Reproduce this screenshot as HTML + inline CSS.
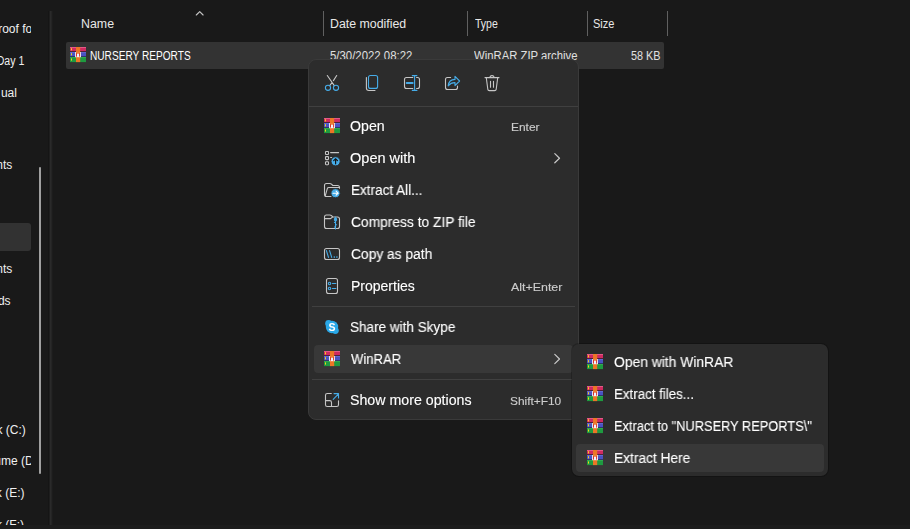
<!DOCTYPE html>
<html><head><meta charset="utf-8"><style>
*{margin:0;padding:0;box-sizing:border-box}
html,body{width:910px;height:529px;overflow:hidden;background:#191919}
body{position:relative;font-family:"Liberation Sans",sans-serif;color:#fff}
.a{position:absolute}
.t{position:absolute;white-space:pre;line-height:1;transform-origin:0 0}
.side{position:absolute;left:0;top:0;width:31px;height:525px;overflow:hidden}
.side .t{font-size:12px;color:#f0f0f0}
.hsep{position:absolute;top:11px;width:1px;height:25px;background:#606060}
.menu{position:absolute;background:#2c2c2c;border:1px solid #3a3a3a;border-radius:8px}
.sep{position:absolute;height:1px;background:#404040}
.hov{position:absolute;background:#383838;border-radius:4px}
svg.ov{position:absolute;left:0;top:0;overflow:visible}
</style></head><body>
<svg width="0" height="0" style="position:absolute"><defs><symbol id="rar" viewBox="0 0 16 16">
<rect x="0" y="0" width="16" height="4.4" fill="#cf2a60"/>
<rect x="0" y="0" width="16" height="1" fill="#e25a88"/>
<rect x="0" y="4.4" width="16" height="0.7" fill="#3a1a30"/>
<rect x="0" y="5.1" width="16" height="4.5" fill="#4a52c2"/>
<rect x="0" y="5.1" width="16" height="0.8" fill="#6670d8"/>
<rect x="0" y="9.6" width="16" height="0.5" fill="#1c2048"/>
<rect x="0" y="10.1" width="16" height="5" fill="#1e9a40"/>
<rect x="0" y="10.1" width="16" height="0.8" fill="#34b454"/>
<rect x="6" y="0" width="4.2" height="15.1" fill="#ec7626"/>
<rect x="5.1" y="5.1" width="5.9" height="5.1" fill="#f4f4f4"/>
<rect x="6" y="5.1" width="4.2" height="1.6" fill="#ec7626"/><path d="M6.5 9.6 V6.2 M9.6 9.6 V6.2" stroke="#d41a1a" stroke-width="0.9"/><rect x="7.2" y="7.2" width="1.8" height="2.6" fill="#eef6ff"/>
<rect x="1" y="1.2" width="1" height="2.2" fill="#f4d41c"/>
<rect x="1" y="6.2" width="1" height="2.2" fill="#f4d41c"/>
<rect x="1" y="11.4" width="1" height="2.2" fill="#f4d41c"/>
</symbol></defs></svg>
<div class="side">
<div class="t" style="top:23px;left:-8.5px">proof fo</div>
<div class="t" style="top:55px;left:-7.2px;transform:scaleX(0.88);transform-origin:31px 0">Day 1</div>
<div class="t" style="top:87px;left:0.9px">ual</div>
<div class="t" style="top:159px;left:-3.7px">nts</div>
<div class="a" style="left:-10px;top:223px;width:41px;height:28px;background:#323232;border-radius:3px"></div>
<div class="t" style="top:263px;left:-3.8px">nts</div>
<div class="t" style="top:295px;left:-2.1px">ds</div>
<div class="t" style="top:424px;left:-3.5px">k (C:)</div>
<div class="t" style="top:455px;left:-22.4px">Volume (D:)</div>
<div class="t" style="top:487px;left:-4.2px">k (E:)</div>
<div class="t" style="top:519px;left:-4px">k (F:)</div>
</div>
<div class="a" style="left:39px;top:167px;width:2px;height:307px;background:#a0a0a0;border-radius:1px"></div>
<div class="a" style="left:48px;top:11px;width:1px;height:514px;background:#151515"></div>
<div class="a" style="left:49px;top:11px;width:1px;height:514px;background:#1e1e1e"></div>
<div class="a" style="left:50px;top:11px;width:1px;height:514px;background:#2a2a2a"></div>
<div class="a" style="left:51px;top:11px;width:1px;height:514px;background:#242424"></div>
<div class="a" style="left:52px;top:11px;width:1px;height:514px;background:#1c1c1c"></div>
<div class="a" style="left:0;top:525px;width:910px;height:4px;background:#1c1c1c"></div>
<div class="t" style="left:80.97px;top:18px;font-size:12px;color:#e8e8e8;transform:scaleX(1.0323);">Name</div>
<div class="t" style="left:329.77px;top:18px;font-size:12px;color:#e8e8e8;transform:scaleX(1.0292);">Date modified</div>
<div class="t" style="left:475.3px;top:18px;font-size:12px;color:#e8e8e8;transform:scaleX(0.8769);">Type</div>
<div class="t" style="left:593.08px;top:18px;font-size:12px;color:#e8e8e8;transform:scaleX(0.9182);">Size</div>
<div class="hsep" style="left:323px"></div>
<div class="hsep" style="left:467px"></div>
<div class="hsep" style="left:587px"></div>
<div class="hsep" style="left:667px"></div>
<div class="a" style="left:66px;top:42px;width:598px;height:27px;background:#333333;border-radius:2px"></div>
<div class="t" style="left:89.76px;top:50px;font-size:12px;color:#ffffff;transform:scaleX(0.8432);">NURSERY REPORTS</div>
<div class="t" style="left:329.85px;top:50px;font-size:12px;color:#e0e0e0;transform:scaleX(0.9494);">5/30/2022 08:22</div>
<div class="t" style="left:474.4px;top:50px;font-size:12px;color:#e0e0e0;transform:scaleX(0.9427);">WinRAR ZIP archive</div>
<div class="t" style="left:630.6px;top:50px;font-size:12px;color:#e0e0e0;transform:scaleX(0.9032);">58 KB</div>
<div class="menu" style="left:308px;top:59px;width:271px;height:361px"></div>
<div class="sep" style="left:309px;top:106px;width:269px"></div>
<div class="sep" style="left:312px;top:306px;width:263px"></div>
<div class="hov" style="left:314px;top:345px;width:259px;height:28px"></div>
<div class="sep" style="left:312px;top:379px;width:263px"></div>
<div class="t" style="left:349.89px;top:119px;font-size:14px;color:#ffffff;transform:scaleX(1.0121);will-change:transform;-webkit-text-stroke:0.12px currentColor;">Open</div>
<div class="t" style="left:349.86px;top:151px;font-size:14px;color:#ffffff;transform:scaleX(1.0377);will-change:transform;-webkit-text-stroke:0.12px currentColor;">Open with</div>
<div class="t" style="left:350.63px;top:183px;font-size:14px;color:#ffffff;transform:scaleX(0.9653);will-change:transform;-webkit-text-stroke:0.12px currentColor;">Extract All...</div>
<div class="t" style="left:350.62px;top:215px;font-size:14px;color:#ffffff;transform:scaleX(0.9848);will-change:transform;-webkit-text-stroke:0.12px currentColor;">Compress to ZIP file</div>
<div class="t" style="left:350.61px;top:247px;font-size:14px;color:#ffffff;transform:scaleX(0.9852);will-change:transform;-webkit-text-stroke:0.12px currentColor;">Copy as path</div>
<div class="t" style="left:350.61px;top:279px;font-size:14px;color:#ffffff;transform:scaleX(0.9935);will-change:transform;-webkit-text-stroke:0.12px currentColor;">Properties</div>
<div class="t" style="left:350.43px;top:320px;font-size:14px;color:#ffffff;transform:scaleX(0.9667);will-change:transform;-webkit-text-stroke:0.12px currentColor;">Share with Skype</div>
<div class="t" style="left:351.4px;top:352px;font-size:14px;color:#ffffff;transform:scaleX(0.9358);will-change:transform;-webkit-text-stroke:0.12px currentColor;">WinRAR</div>
<div class="t" style="left:350.39px;top:393px;font-size:14px;color:#ffffff;transform:scaleX(1.0144);will-change:transform;-webkit-text-stroke:0.12px currentColor;">Show more options</div>
<div class="t" style="left:510.76px;top:122px;font-size:11.5px;color:#cccccc;transform:scaleX(1.0385);will-change:transform;-webkit-text-stroke:0.12px currentColor;">Enter</div>
<div class="t" style="left:511.2px;top:282px;font-size:11.5px;color:#cccccc;transform:scaleX(1.0787);will-change:transform;-webkit-text-stroke:0.12px currentColor;">Alt+Enter</div>
<div class="t" style="left:510.17px;top:396px;font-size:11.5px;color:#cccccc;transform:scaleX(1.0333);will-change:transform;-webkit-text-stroke:0.12px currentColor;">Shift+F10</div>
<div class="a" style="left:571px;top:343px;width:258px;height:134px;background:#2c2c2c;background-clip:padding-box;border:1px solid rgba(0,0,0,0.22);border-radius:8px"></div>
<div class="hov" style="left:576px;top:444px;width:248px;height:28px"></div>
<div class="t" style="left:614.11px;top:355px;font-size:14px;color:#ffffff;transform:scaleX(0.9891);will-change:transform;-webkit-text-stroke:0.12px currentColor;">Open with WinRAR</div>
<div class="t" style="left:614.15px;top:387px;font-size:14px;color:#ffffff;transform:scaleX(0.9512);will-change:transform;-webkit-text-stroke:0.12px currentColor;">Extract files...</div>
<div class="t" style="left:614.18px;top:419px;font-size:14px;color:#ffffff;transform:scaleX(0.9153);will-change:transform;-webkit-text-stroke:0.12px currentColor;">Extract to &quot;NURSERY REPORTS\&quot;</div>
<div class="t" style="left:614.12px;top:451px;font-size:14px;color:#ffffff;transform:scaleX(0.9803);will-change:transform;-webkit-text-stroke:0.12px currentColor;">Extract Here</div>
<svg class="ov" width="910" height="529" viewBox="0 0 910 529">
<use href="#rar" x="70" y="47" width="16" height="16"/>
<use href="#rar" x="324" y="118" width="16" height="16"/>
<use href="#rar" x="324" y="351" width="16" height="16"/>
<use href="#rar" x="587" y="354" width="16" height="16"/>
<use href="#rar" x="587" y="386" width="16" height="16"/>
<use href="#rar" x="587" y="418" width="16" height="16"/>
<use href="#rar" x="587" y="450" width="16" height="16"/>
<path d="M196.3 15 L199.7 11.6 L203.1 15" stroke="#c4c4c4" stroke-width="1.15" fill="none" stroke-linecap="round" stroke-linejoin="round"/>
<path d="M327.3 75.5 L334.3 85.6 M336.7 75.5 L333.4 80.6 M332.2 82.4 L329.7 85.6" stroke="#c6c6c6" stroke-width="1.1" fill="none" stroke-linecap="round" stroke-linejoin="round"/>
<circle cx="328" cy="87.8" r="2.6" stroke="#46ace8" stroke-width="1.1" fill="none" stroke-linecap="round" stroke-linejoin="round"/><circle cx="336" cy="87.8" r="2.6" stroke="#46ace8" stroke-width="1.1" fill="none" stroke-linecap="round" stroke-linejoin="round"/>
<rect x="368.5" y="75.5" width="9.1" height="12.9" rx="2" stroke="#46ace8" stroke-width="1.1" fill="none" stroke-linecap="round" stroke-linejoin="round"/>
<path d="M366.4 77.6 V88 Q366.4 90.5 368.9 90.5 H375" stroke="#c6c6c6" stroke-width="1.1" fill="none" stroke-linecap="round" stroke-linejoin="round"/>
<path d="M412.8 77.5 H406.5 Q404.5 77.5 404.5 79.5 V86.5 Q404.5 88.5 406.5 88.5 H412.8 M416.6 77.5 H417.5 Q419.5 77.5 419.5 79.5 V86.5 Q419.5 88.5 417.5 88.5 H416.6" stroke="#c6c6c6" stroke-width="1.1" fill="none" stroke-linecap="round" stroke-linejoin="round"/>
<path d="M414.6 75.6 V90.4 M412.3 75.6 H416.9 M412.3 90.4 H416.9" stroke="#46ace8" stroke-width="1.1" fill="none" stroke-linecap="round" stroke-linejoin="round"/>
<path d="M406.7 83 H412.6" stroke="#46ace8" stroke-width="2" stroke-linecap="round"/>
<path d="M450.6 77.5 H447.5 Q445.5 77.5 445.5 79.5 V87.5 Q445.5 89.5 447.5 89.5 H455.5 Q457.5 89.5 457.5 87.5 V86" stroke="#c6c6c6" stroke-width="1.1" fill="none" stroke-linecap="round" stroke-linejoin="round"/>
<path d="M448.2 85.8 Q448.8 79.6 455 79.4 V76.3 L459.6 81 L455 85.6 V82.6 Q451 82.4 448.2 85.8 Z" stroke="#46ace8" stroke-width="1.1" fill="none" stroke-linecap="round" stroke-linejoin="round"/>
<path d="M485 77.6 H499 M490 77.6 Q490 75.6 492 75.6 Q494 75.6 494 77.6 M486.3 77.8 L487.8 89.3 Q488 90.6 489.3 90.6 H494.7 Q496 90.6 496.2 89.3 L497.7 77.8 M490.5 81.3 V87.2 M493.5 81.3 V87.2" stroke="#c6c6c6" stroke-width="1.1" fill="none" stroke-linecap="round" stroke-linejoin="round"/>
<rect x="325.5" y="151.5" width="3" height="3" rx="0.6" stroke="#c6c6c6" stroke-width="1.1" fill="none" stroke-linecap="round" stroke-linejoin="round"/><rect x="325.5" y="156.6" width="3" height="3" rx="0.6" stroke="#c6c6c6" stroke-width="1.1" fill="none" stroke-linecap="round" stroke-linejoin="round"/><rect x="325.5" y="161.7" width="3" height="3" rx="0.6" stroke="#c6c6c6" stroke-width="1.1" fill="none" stroke-linecap="round" stroke-linejoin="round"/>
<path d="M330.6 152.6 H338.6 M330.6 157.5 H331.6" stroke="#c6c6c6" stroke-width="1.1" fill="none" stroke-linecap="round" stroke-linejoin="round"/>
<circle cx="335.6" cy="161.3" r="4.6" fill="#46ace8" stroke="#2c2c2c" stroke-width="1"/>
<path d="M335.6 163.8 V158.9 M333.7 160.7 L335.6 158.8 L337.5 160.7" stroke="#151515" stroke-width="1.2" fill="none" stroke-linecap="round"/>
<path d="M331 196.5 H326.5 Q324.5 196.5 324.5 194.5 V185.5 Q324.5 183.5 326.5 183.5 H329.8 Q330.8 183.5 331.5 184.2 L332.8 185.5 H337.5 Q339.5 185.5 339.5 187.5 V188.2 M325.3 195.6 L327.3 188.6 Q327.6 187.5 328.8 187.5 H339.3" stroke="#c6c6c6" stroke-width="1.1" fill="none" stroke-linecap="round" stroke-linejoin="round"/>
<circle cx="335.5" cy="193.2" r="4.6" fill="#46ace8" stroke="#2c2c2c" stroke-width="1"/>
<path d="M333 193.2 H338 M336.1 191.2 L338.1 193.2 L336.1 195.2" stroke="#ffffff" stroke-width="1.1" fill="none" stroke-linecap="round"/>
<path d="M324.5 217 Q324.5 215 326.5 215 H329.8 Q330.8 215 331.5 215.7 L332.8 217 H337.5 Q339.5 217 339.5 219 V226.5 Q339.5 228.5 337.5 228.5 H326.5 Q324.5 228.5 324.5 226.5 Z M324.6 218.6 H330.6 L332.6 217" stroke="#c6c6c6" stroke-width="1.1" fill="none" stroke-linecap="round" stroke-linejoin="round"/>
<path d="M335.5 217 V229 M334.4 222.5 H335.5 M335.5 224.8 H336.6 M334.4 227 H335.5" stroke="#46ace8" stroke-width="1.1" fill="none" stroke-linecap="round" stroke-linejoin="round"/><ellipse cx="335.5" cy="219.6" rx="1.1" ry="1.5" stroke="#46ace8" stroke-width="1.1" fill="none" stroke-linecap="round" stroke-linejoin="round"/>
<rect x="324.5" y="248.5" width="15" height="11" rx="2" stroke="#c6c6c6" stroke-width="1.1" fill="none" stroke-linecap="round" stroke-linejoin="round"/>
<path d="M326.4 250.6 L328.5 257.4 M329.6 250.6 L331.7 257.4" stroke="#46ace8" stroke-width="1.1" fill="none" stroke-linecap="round" stroke-linejoin="round"/><circle cx="334.3" cy="257.1" r="0.8" fill="#46ace8"/><circle cx="336.9" cy="257.1" r="0.8" fill="#46ace8"/>
<rect x="326.5" y="278.5" width="11" height="15" rx="2" stroke="#c6c6c6" stroke-width="1.1" fill="none" stroke-linecap="round" stroke-linejoin="round"/>
<circle cx="329.5" cy="283.5" r="1.2" stroke="#46ace8" stroke-width="1.1" fill="none" stroke-linecap="round" stroke-linejoin="round"/><circle cx="329.5" cy="288.5" r="1.2" stroke="#46ace8" stroke-width="1.1" fill="none" stroke-linecap="round" stroke-linejoin="round"/><path d="M332.4 283.5 H335.9 M332.4 288.5 H335.9" stroke="#46ace8" stroke-width="1.1" fill="none" stroke-linecap="round" stroke-linejoin="round"/>
<circle cx="332" cy="327" r="6.2" fill="#2aa8e8"/><circle cx="328.6" cy="323.4" r="3.4" fill="#2aa8e8"/><circle cx="335.4" cy="330.6" r="3.4" fill="#2aa8e8"/>
<text x="332" y="331" font-family="Liberation Sans" font-weight="bold" font-size="10.5" fill="#fff" text-anchor="middle">S</text>
<path d="M331.3 393.5 H327.3 Q325.5 393.5 325.5 395.3 V404.7 Q325.5 406.5 327.3 406.5 H336.7 Q338.5 406.5 338.5 404.7 V400.7 M325.5 400.6 H329.7 Q331.5 400.6 331.5 402.4 V406.5" stroke="#c6c6c6" stroke-width="1.1" fill="none" stroke-linecap="round" stroke-linejoin="round"/>
<path d="M333.2 399.3 L338.3 394.2 M334 393.6 H338.5 V398" stroke="#46ace8" stroke-width="1.1" fill="none" stroke-linecap="round" stroke-linejoin="round"/>
<path d="M554.8 153.6 L559.5 158.2 L554.8 162.8 M554.8 354.4 L559.5 359 L554.8 363.6" stroke="#c8c8c8" stroke-width="1.2" fill="none" stroke-linecap="round" stroke-linejoin="round"/>
</svg>
</body></html>
